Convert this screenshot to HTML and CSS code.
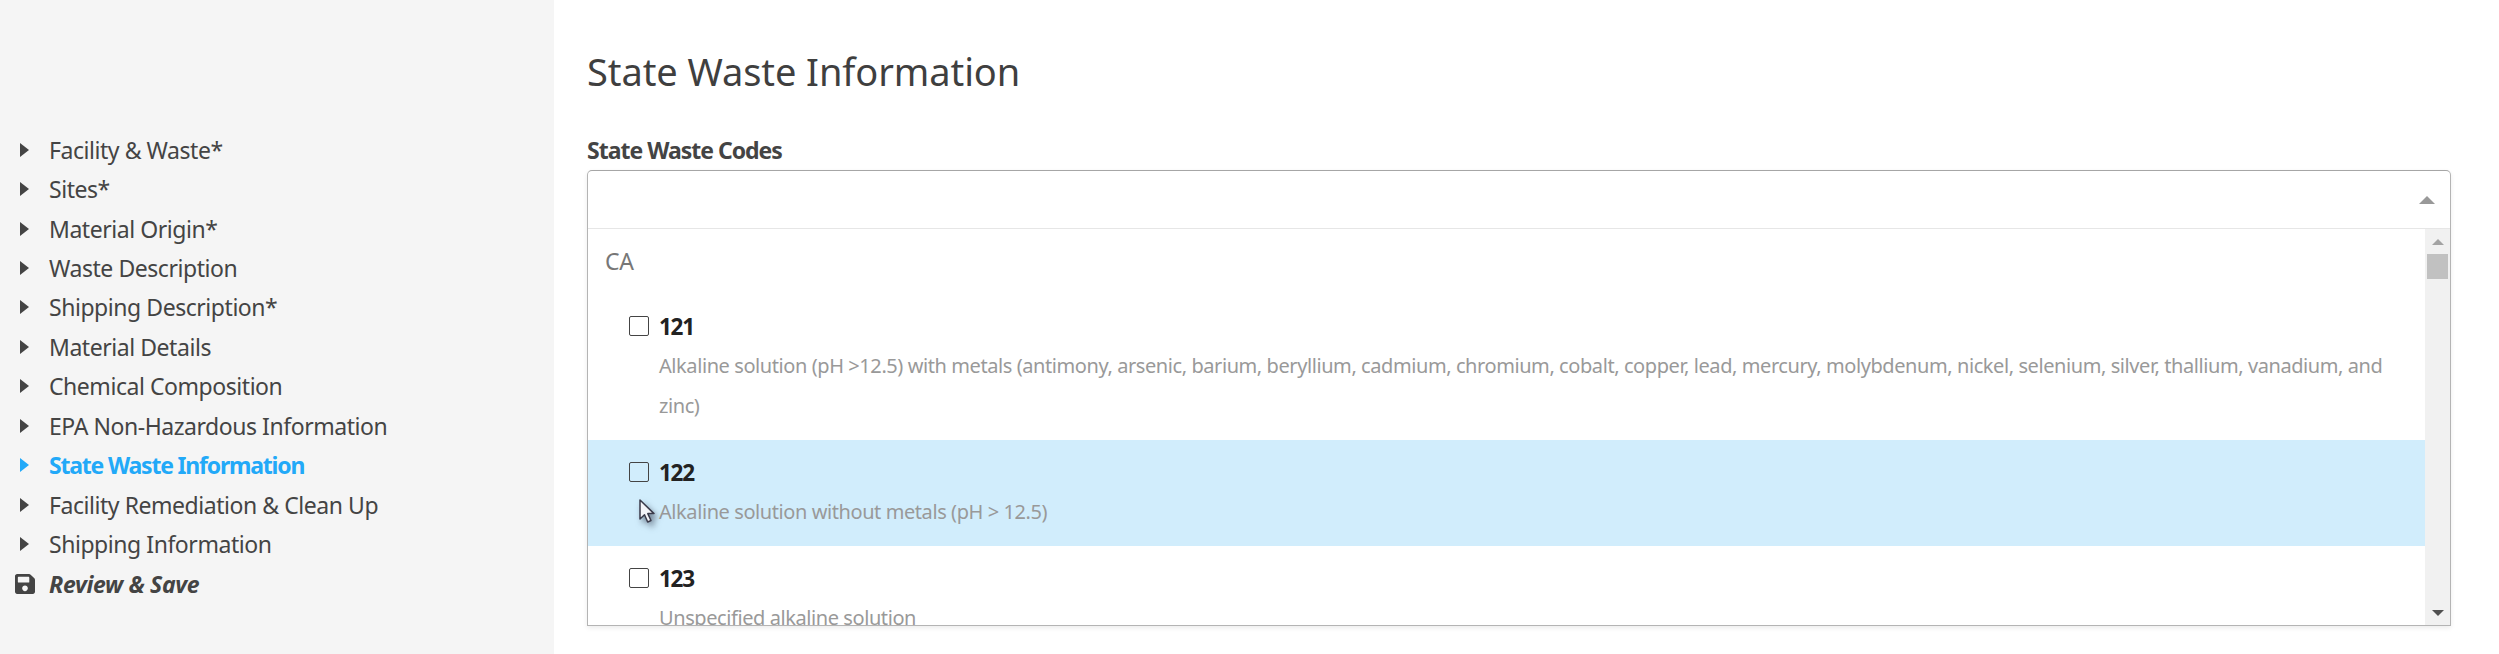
FILE: index.html
```html
<!DOCTYPE html>
<html>
  <head>
    <title>State Waste Information</title>
    <link rel="stylesheet" href="styles.css">
  </head>
  <body>
    <div class="sidebar">
      <ul class="nav">
        <li><span class="caret"></span>Facility &amp; Waste*</li>
        <li><span class="caret"></span>Sites*</li>
        <li><span class="caret"></span>Material Origin*</li>
        <li><span class="caret"></span>Waste Description</li>
        <li><span class="caret"></span>Shipping Description*</li>
        <li><span class="caret"></span>Material Details</li>
        <li><span class="caret"></span>Chemical Composition</li>
        <li><span class="caret"></span>EPA Non-Hazardous Information</li>
        <li class="active"><span class="caret"></span>State Waste Information</li>
        <li><span class="caret"></span>Facility Remediation &amp; Clean Up</li>
        <li><span class="caret"></span>Shipping Information</li>
        <li class="review">
          <svg class="save-icon" viewBox="0 32 448 448"><path fill="currentColor" d="M433.941 129.941l-83.882-83.882A48 48 0 0 0 316.118 32H48C21.49 32 0 53.49 0 80v352c0 26.51 21.49 48 48 48h352c26.51 0 48-21.49 48-48V163.882a48 48 0 0 0-14.059-33.941zM224 416c-35.346 0-64-28.654-64-64 0-35.346 28.654-64 64-64s64 28.654 64 64c0 35.346-28.654 64-64 64zm96-304.52V212c0 6.627-5.373 12-12 12H76c-6.627 0-12-5.373-12-12V108c0-6.627 5.373-12 12-12h228.52c3.183 0 6.235 1.264 8.485 3.515l3.48 3.48A11.996 11.996 0 0 1 320 111.48z"/></svg>
          Review &amp; Save
        </li>
      </ul>
    </div>
    <div class="main">
      <h1>State Waste Information</h1>
      <label class="field-label">State Waste Codes</label>
      <div class="multiselect">
        <div class="select-head"><span class="select-caret"></span></div>
        <div class="dropdown">
          <div class="options">
            <div class="group-name">CA</div>
            <div class="option">
              <div class="option-title"><span class="checkbox"></span>121</div>
              <div class="option-desc">Alkaline solution (pH &gt;12.5) with metals (antimony, arsenic, barium, beryllium, cadmium, chromium, cobalt, copper, lead, mercury, molybdenum, nickel, selenium, silver, thallium, vanadium, and zinc)</div>
            </div>
            <div class="option hover">
              <div class="option-title"><span class="checkbox"></span>122</div>
              <div class="option-desc">Alkaline solution without metals (pH &gt; 12.5)</div>
              <svg class="cursor" viewBox="0 0 16 25"><path d="M1 1v19l4.500-4.200 3.200 7.200 3.300-1.500-3.200-6.900h6.200z" fill="#f4f4f8" stroke="#3a3a4a" stroke-width="1.500" stroke-linejoin="round"/></svg>
            </div>
            <div class="option">
              <div class="option-title"><span class="checkbox"></span>123</div>
              <div class="option-desc">Unspecified alkaline solution</div>
            </div>
          </div>
          <div class="scrollbar">
            <span class="scroll-up"></span>
            <span class="scroll-thumb"></span>
            <span class="scroll-down"></span>
          </div>
        </div>
      </div>
    </div>
  </body>
</html>
```

FILE: styles.css
```css
html, body {
  height: 100%;
}
body {
  margin: 0;
  display: flex;
  overflow: hidden;
  font-family: "Noto Sans", Arial, sans-serif;
  color: #444;
  background-color: #fff;
}
.sidebar {
  width: 554px;
  flex-shrink: 0;
  background-color: #f5f5f5;
  padding-top: 130px;
  box-sizing: border-box;
}
.nav {
  list-style: none;
  margin: 0;
  padding: 0;
}
.nav li {
  display: flex;
  align-items: center;
  height: 39.45px;
  padding-left: 20px;
  font-size: 23px;
  letter-spacing: -0.45px;
  white-space: nowrap;
}
.caret {
  width: 0;
  height: 0;
  margin-right: 20px;
  border-left: 9px solid currentColor;
  border-top: 7px solid transparent;
  border-bottom: 7px solid transparent;
}
.nav li.active {
  color: #22a9f8;
  font-weight: 700;
  letter-spacing: -1.2px;
}
.nav li.review {
  padding-left: 15px;
  font-style: italic;
  font-weight: 700;
  letter-spacing: -0.32px;
}
.save-icon {
  width: 20px;
  height: 20px;
  margin-right: 14px;
}
.main {
  flex: 1;
  padding: 0 48px 0 33px;
}
h1 {
  margin: 45px 0 0;
  font-size: 38px;
  line-height: 52px;
  font-weight: 400;
  letter-spacing: -0.08px;
  color: #3f3f3f;
}
.field-label {
  display: block;
  margin-top: 38px;
  margin-bottom: 5px;
  font-size: 23px;
  line-height: 30px;
  font-weight: 700;
  letter-spacing: -1px;
}
.multiselect {
  border: 1px solid #b4b4b4;
  border-top-color: #a6a6a6;
  border-radius: 5px 5px 0 0;
  box-shadow: 0 2px 5px rgba(0, 0, 0, 0.08);
  overflow: hidden;
}
.select-head {
  height: 57px;
  display: flex;
  justify-content: flex-end;
  align-items: center;
  padding-right: 15px;
  border-bottom: 1px solid #e6e6e6;
}
.select-caret {
  width: 0;
  height: 0;
  border-left: 8px solid transparent;
  border-right: 8px solid transparent;
  border-bottom: 8px solid #999;
}
.dropdown {
  display: flex;
  height: 396px;
}
.options {
  flex: 1;
  overflow: hidden;
}
.group-name {
  height: 65px;
  padding: 12px 0 0 17px;
  box-sizing: border-box;
  font-size: 23px;
  line-height: 40px;
  color: #777;
  letter-spacing: -0.4px;
}
.option {
  position: relative;
  padding: 12px 17px 14px 41px;
}
.option.hover {
  background-color: #d1edfc;
}
.option-title {
  display: flex;
  align-items: center;
  height: 40px;
  font-size: 22.5px;
  font-weight: 700;
  letter-spacing: -1.3px;
  color: #222;
}
.checkbox {
  width: 20px;
  height: 20px;
  box-sizing: border-box;
  margin-right: 10px;
  border: 1.5px solid #444;
  border-radius: 2px;
}
.option-desc {
  padding-left: 30px;
  font-size: 20px;
  line-height: 40px;
  letter-spacing: -0.42px;
  color: #999;
}
.cursor {
  position: absolute;
  left: 51px;
  top: 59px;
  width: 16px;
  height: 25px;
  filter: drop-shadow(3px 4px 3px rgba(50, 60, 80, 0.6));
}
.scrollbar {
  width: 25px;
  flex-shrink: 0;
  display: flex;
  flex-direction: column;
  align-items: center;
  box-sizing: border-box;
  padding-top: 10px;
  background-color: #f1f1f1;
}
.scroll-up {
  width: 0;
  height: 0;
  border-left: 6px solid transparent;
  border-right: 6px solid transparent;
  border-bottom: 6px solid #a3a3a3;
}
.scroll-thumb {
  width: 21px;
  height: 25px;
  margin-top: 9px;
  background-color: #c1c1c1;
}
.scroll-down {
  width: 0;
  height: 0;
  margin-top: auto;
  margin-bottom: 9px;
  border-left: 6px solid transparent;
  border-right: 6px solid transparent;
  border-top: 6px solid #505050;
}
```
